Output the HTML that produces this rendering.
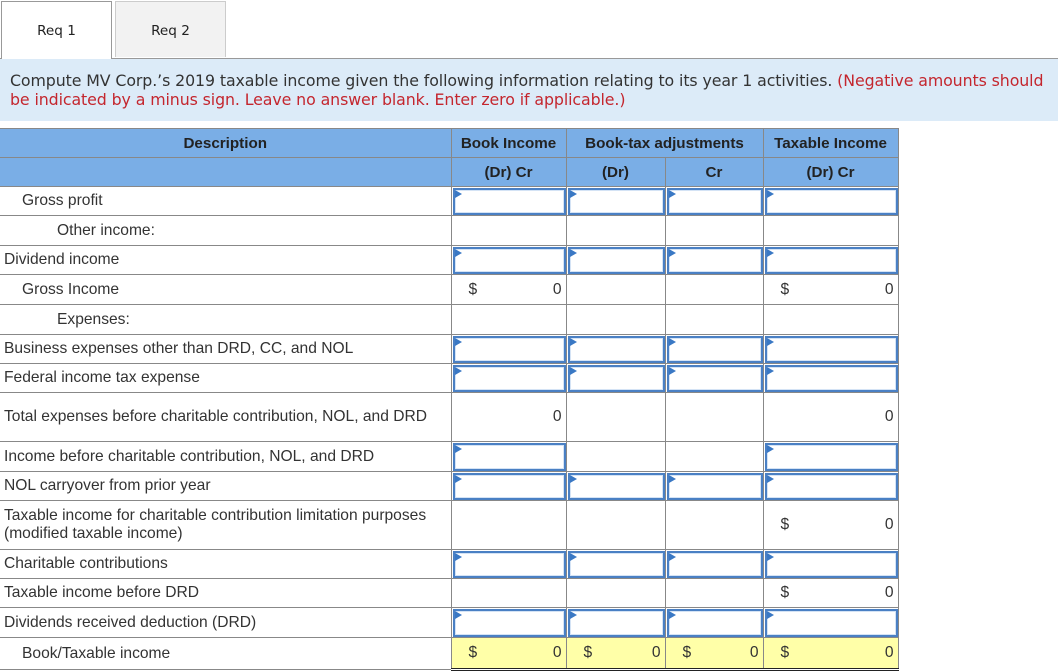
<!DOCTYPE html>
<html><head><style>
body{margin:0;background:#fff;width:1058px;height:672px;overflow:hidden;position:relative;font-family:"Liberation Sans",Arial,sans-serif;}
.tab{position:absolute;top:1px;height:56px;font:13.6px "DejaVu Sans",Verdana,sans-serif;color:#222;text-align:center;line-height:58px;box-sizing:border-box}
#t1{left:1px;width:111px;border:1px solid #999;border-bottom:none;background:#fff;height:58px;z-index:2}
#t2{left:115px;width:111px;border:1px solid #ccc;border-bottom:none;background:#f2f2f2}
#line{position:absolute;left:0;top:58px;width:1058px;height:1px;background:#999}
#prompt{position:absolute;left:0;top:59px;width:1058px;height:62px;background:#dcebf8;box-sizing:border-box;padding:12px 8px 0 10px;font:15.8px/19px "DejaVu Sans",Verdana,sans-serif;color:#333;letter-spacing:-0.1px}
#prompt span{color:#c4262e}
table{position:absolute;left:0;top:128px;border-collapse:collapse;table-layout:fixed;width:898px;font-size:15.6px;color:#333}
td{border:1px solid #888;padding:0 4px;position:relative;box-sizing:border-box;vertical-align:middle}
td.d{border-left:none}
thead td{background:#7aaee6;text-align:center;font-weight:bold;color:#222;font-size:15.2px}
.i:after{content:"";position:absolute;left:1px;top:1px;right:0;bottom:0;border:2px solid #4a80c4;box-shadow:inset 0 0 0 1px #d4e3f5}
.i:before{content:"";position:absolute;left:3px;top:3px;border-left:7px solid #3a78c4;border-top:4px solid transparent;border-bottom:4px solid transparent;z-index:2}
.v{text-align:right}
.v b{font-weight:normal;position:absolute;left:17px}
.y{background:#ffffa8}
.l1{padding-left:22px}.l2{padding-left:57px}
tr.last td{border-bottom:3px double #222}
</style></head><body>
<div class="tab" id="t1">Req 1</div>
<div class="tab" id="t2">Req 2</div>
<div id="line"></div>
<div id="prompt">Compute MV Corp.’s 2019 taxable income given the following information relating to its year 1 activities. <span>(Negative amounts should be indicated by a minus sign. Leave no answer blank. Enter zero if applicable.)</span></div>
<table>
<colgroup><col style="width:451px"><col style="width:115px"><col style="width:99px"><col style="width:98px"><col style="width:135px"></colgroup>
<thead>
<tr style="height:29px"><td class="d">Description</td><td>Book Income</td><td colspan="2">Book-tax adjustments</td><td>Taxable Income</td></tr>
<tr style="height:29px"><td class="d"></td><td>(Dr) Cr</td><td>(Dr)</td><td>Cr</td><td>(Dr) Cr</td></tr>
</thead>
<tbody>
<tr style="height:29px"><td class="d l1">Gross profit</td><td class="i"></td><td class="i"></td><td class="i"></td><td class="i"></td></tr>
<tr style="height:30px"><td class="d l2">Other income:</td><td></td><td></td><td></td><td></td></tr>
<tr style="height:29px"><td class="d">Dividend income</td><td class="i"></td><td class="i"></td><td class="i"></td><td class="i"></td></tr>
<tr style="height:30px"><td class="d l1">Gross Income</td><td class="v"><b>$</b>0</td><td></td><td></td><td class="v"><b>$</b>0</td></tr>
<tr style="height:30px"><td class="d l2">Expenses:</td><td></td><td></td><td></td><td></td></tr>
<tr style="height:29px"><td class="d">Business expenses other than DRD, CC, and NOL</td><td class="i"></td><td class="i"></td><td class="i"></td><td class="i"></td></tr>
<tr style="height:29px"><td class="d">Federal income tax expense</td><td class="i"></td><td class="i"></td><td class="i"></td><td class="i"></td></tr>
<tr style="height:49px"><td class="d">Total expenses before charitable contribution, NOL, and DRD</td><td class="v">0</td><td></td><td></td><td class="v">0</td></tr>
<tr style="height:30px"><td class="d">Income before charitable contribution, NOL, and DRD</td><td class="i"></td><td></td><td></td><td class="i"></td></tr>
<tr style="height:29px"><td class="d">NOL carryover from prior year</td><td class="i"></td><td class="i"></td><td class="i"></td><td class="i"></td></tr>
<tr style="height:49px"><td class="d" style="line-height:18px">Taxable income for charitable contribution limitation purposes (modified taxable income)</td><td></td><td></td><td></td><td class="v"><b>$</b>0</td></tr>
<tr style="height:29px"><td class="d">Charitable contributions</td><td class="i"></td><td class="i"></td><td class="i"></td><td class="i"></td></tr>
<tr style="height:29px"><td class="d">Taxable income before DRD</td><td></td><td></td><td></td><td class="v"><b>$</b>0</td></tr>
<tr style="height:30px"><td class="d">Dividends received deduction (DRD)</td><td class="i"></td><td class="i"></td><td class="i"></td><td class="i"></td></tr>
<tr style="height:32px" class="last"><td class="d l1" style="border-bottom:1px solid #888">Book/Taxable income</td><td class="v y"><b>$</b>0</td><td class="v y"><b>$</b>0</td><td class="v y"><b>$</b>0</td><td class="v y"><b>$</b>0</td></tr>
</tbody></table>
</body></html>
